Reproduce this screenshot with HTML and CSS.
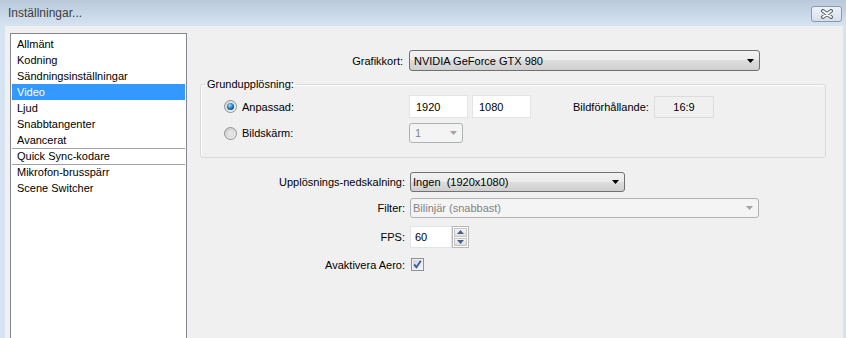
FILE: index.html
```html
<!DOCTYPE html>
<html>
    <head>
        <title>Inställningar...</title>
        <link rel="stylesheet" href="styles.css">
    </head>
    <body>
        <div class='window'>
            <div class='titlebar'>
                <span class='title'>Inställningar...</span>
                <div class='closeBtn'>
                    <svg viewBox='0 0 14 10' width='14' height='10'>
                        <path d='M3 2L11 8M11 2L3 8' stroke='#56606e' stroke-width='4' stroke-linecap='round'/>
                        <path d='M3 2L11 8M11 2L3 8' stroke='#fff' stroke-width='2' stroke-linecap='round'/>
                    </svg>
                </div>
            </div>
            <div class='frame'>
                <div class='client'>
                    <ul class='nav'>
                        <li>Allmänt</li>
                        <li>Kodning</li>
                        <li>Sändningsinställningar</li>
                        <li class='active'>Video</li>
                        <li>Ljud</li>
                        <li>Snabbtangenter</li>
                        <li>Avancerat</li>
                        <li class='sep'>Quick Sync-kodare</li>
                        <li class='sep'>Mikrofon-brusspärr</li>
                        <li>Scene Switcher</li>
                    </ul>
                    <div class='panel'>
                        <div class='row rowGpu'>
                            <span class='lbl'>Grafikkort:</span>
                            <div class='combo comboGpu'>
                                <span class='comboText'>NVIDIA GeForce GTX 980</span>
                                <svg class='arrow' viewBox='0 0 7 4' width='7' height='4'><path d='M0 0H7L3.5 4Z'/></svg>
                            </div>
                        </div>
                        <fieldset class='group'>
                            <legend>Grundupplösning:</legend>
                            <div class='grpRow'>
                                <div class='radioOpt'>
                                    <svg class='radio' viewBox='0 0 13 13' width='13' height='13'>
                                        <defs>
                                            <linearGradient id='rOut' x1='0' y1='0' x2='1' y2='1'>
                                                <stop offset='0' stop-color='#d4d4d4'/>
                                                <stop offset='1' stop-color='#f8f8f8'/>
                                            </linearGradient>
                                            <radialGradient id='rDot' cx='0.4' cy='0.35' r='0.7'>
                                                <stop offset='0' stop-color='#a8e1fb'/>
                                                <stop offset='0.5' stop-color='#2f8ad0'/>
                                                <stop offset='1' stop-color='#123f6b'/>
                                            </radialGradient>
                                        </defs>
                                        <circle cx='6.5' cy='6.5' r='6' fill='url(#rOut)' stroke='#8a8f95'/>
                                        <circle cx='6.5' cy='6.5' r='3.6' fill='url(#rDot)'/>
                                    </svg>
                                    <span>Anpassad:</span>
                                </div>
                                <div class='field'>1920</div>
                                <div class='field fieldGap'>1080</div>
                                <span class='ratioLbl'>Bildförhållande:</span>
                                <div class='ratioBox'>16:9</div>
                            </div>
                            <div class='grpRow grpRow2'>
                                <div class='radioOpt'>
                                    <svg class='radio' viewBox='0 0 13 13' width='13' height='13'>
                                        <defs>
                                            <linearGradient id='rOff' x1='0' y1='0' x2='1' y2='1'>
                                                <stop offset='0' stop-color='#c9c9c9'/>
                                                <stop offset='1' stop-color='#f6f6f6'/>
                                            </linearGradient>
                                        </defs>
                                        <circle cx='6.5' cy='6.5' r='6' fill='url(#rOff)' stroke='#8f9296'/>
                                        <circle cx='6.5' cy='6.5' r='3.6' fill='#e4e4e4' stroke='#d0d0d0' stroke-width='0.6'/>
                                    </svg>
                                    <span>Bildskärm:</span>
                                </div>
                                <div class='combo disabled comboScreen'>
                                    <span class='comboText'>1</span>
                                    <svg class='arrow' viewBox='0 0 7 4' width='7' height='4'><path d='M0 0H7L3.5 4Z'/></svg>
                                </div>
                            </div>
                        </fieldset>
                        <div class='row rowScale'>
                            <span class='lbl'>Upplösnings-nedskalning:</span>
                            <div class='combo comboScale'>
                                <span class='comboText'>Ingen&nbsp; (1920x1080)</span>
                                <svg class='arrow' viewBox='0 0 7 4' width='7' height='4'><path d='M0 0H7L3.5 4Z'/></svg>
                            </div>
                        </div>
                        <div class='row rowFilter'>
                            <span class='lbl'>Filter:</span>
                            <div class='combo disabled comboFilter'>
                                <span class='comboText'>Bilinjär (snabbast)</span>
                                <svg class='arrow' viewBox='0 0 7 4' width='7' height='4'><path d='M0 0H7L3.5 4Z'/></svg>
                            </div>
                        </div>
                        <div class='row rowFps'>
                            <span class='lbl'>FPS:</span>
                            <div class='spin'>
                                <div class='spinField'>60</div>
                                <div class='spinBtns'>
                                    <div class='spinBtn'>
                                        <svg viewBox='0 0 7 4' width='7' height='4'><path d='M0 4H7L3.5 0Z' fill='#4b6089'/></svg>
                                    </div>
                                    <div class='spinBtn'>
                                        <svg viewBox='0 0 7 4' width='7' height='4'><path d='M0 0H7L3.5 4Z' fill='#4b6089'/></svg>
                                    </div>
                                </div>
                            </div>
                        </div>
                        <div class='row rowAero'>
                            <span class='lbl'>Avaktivera Aero:</span>
                            <svg class='check' viewBox='0 0 13 13' width='13' height='13'>
                                <defs>
                                    <linearGradient id='cIn' x1='0' y1='0' x2='1' y2='1'>
                                        <stop offset='0' stop-color='#cfd3d8'/>
                                        <stop offset='1' stop-color='#f4f5f7'/>
                                    </linearGradient>
                                </defs>
                                <rect x='0.5' y='0.5' width='12' height='12' fill='#f4f4f4' stroke='#8e8f8f'/>
                                <rect x='2' y='2' width='9' height='9' fill='url(#cIn)'/>
                                <path d='M3.2 6.4L5.4 9.2L9.8 2.8' fill='none' stroke='#3a5a9e' stroke-width='1.8'/>
                            </svg>
                        </div>
                    </div>
                </div>
            </div>
        </div>
    </body>
</html>
```

FILE: styles.css
```css
html, body {
    margin: 0;
    height: 100%;
    overflow: hidden;
}
body {
    font-family: "Liberation Sans", Arial, sans-serif;
    font-size: 11px;
    color: #000;
    background-color: #d6e3f1;
}
.window {
    display: flex;
    flex-direction: column;
    height: 100%;
}
.titlebar {
    height: 26px;
    flex-shrink: 0;
    display: flex;
    align-items: center;
    padding: 0 4px 0 8px;
    background: linear-gradient(#b9c9db, #d6e3f1);
}
.title {
    flex-grow: 1;
    font-size: 12px;
    color: #3c3c3c;
}
.closeBtn {
    width: 29px;
    height: 14px;
    margin-top: 2px;
    border: 1px solid #8d99aa;
    border-radius: 3px;
    background: linear-gradient(#eef3f9, #d6dfeb);
    display: flex;
    align-items: center;
    justify-content: center;
}
.frame {
    flex-grow: 1;
    min-height: 0;
    display: flex;
    padding: 0 3px 0 5px;
}
.client {
    flex-grow: 1;
    display: flex;
    padding: 7px 0 0 5px;
    background-color: #f0f0f0;
    overflow: hidden;
}
.nav {
    box-sizing: border-box;
    width: 177px;
    flex-shrink: 0;
    margin: 0 0 -6px 0;
    padding: 2px 1px 0 1px;
    list-style: none;
    background-color: #fff;
    border: 1px solid #828790;
}
.nav li {
    box-sizing: border-box;
    height: 16px;
    line-height: 16px;
    padding-left: 5px;
    white-space: nowrap;
}
.nav li.sep {
    border-top: 1px solid #a0a0a0;
    line-height: 15px;
}
.nav li.active {
    background-color: #3399ff;
    color: #fff;
}
.panel {
    width: 626px;
    margin-left: 13px;
    padding-top: 17px;
    display: flex;
    flex-direction: column;
}
.row {
    display: flex;
    align-items: center;
}
.lbl {
    width: 205px;
    margin-right: 5px;
    flex-shrink: 0;
    text-align: right;
    white-space: nowrap;
}
.rowGpu .lbl {
    width: 203px;
    margin-right: 6px;
}
.combo {
    box-sizing: border-box;
    display: flex;
    align-items: center;
    padding: 0 5px 0 3px;
    border: 1px solid #707070;
    border-radius: 3px;
    background: linear-gradient(#f2f2f2 0%, #ebebeb 50%, #dddddd 50%, #cfcfcf 100%);
    white-space: nowrap;
}
.comboText {
    flex-grow: 1;
}
.arrow {
    fill: #000;
}
.combo.disabled {
    background: #f4f4f4;
    border-color: #adb2b5;
    color: #838383;
}
.combo.disabled .arrow {
    fill: #a3a3a3;
}
.comboGpu {
    width: 351px;
    height: 21px;
    padding-left: 4px;
}
.group {
    box-sizing: border-box;
    width: 626px;
    min-width: 0;
    margin: 7px 0 0 0;
    padding: 4px 0 14px 0;
    border: 1px solid #d9d9d9;
    border-radius: 3px;
    box-shadow: inset 1px 1px 0 #fff;
}
.group legend {
    margin-left: 4px;
    padding: 0 2px;
    line-height: 13px;
}
.grpRow {
    display: flex;
    align-items: center;
    padding-left: 23px;
}
.grpRow2 {
    margin-top: 5px;
}
.radioOpt {
    width: 185px;
    flex-shrink: 0;
    display: flex;
    align-items: center;
}
.radio {
    margin-right: 5px;
}
.field {
    box-sizing: border-box;
    width: 59px;
    height: 23px;
    padding-left: 6px;
    display: flex;
    align-items: center;
    background-color: #fff;
    border: 1px solid #e3e4e8;
}
.fieldGap {
    margin-left: 4px;
}
.ratioLbl {
    width: 81px;
    margin-left: 42px;
}
.ratioBox {
    box-sizing: border-box;
    width: 60px;
    height: 22px;
    line-height: 20px;
    text-align: center;
    border: 1px solid #dcdcdc;
    background-color: #f0f0f0;
}
.comboScreen {
    width: 54px;
    height: 20px;
    padding-left: 5px;
}
.rowScale {
    margin-top: 14px;
}
.comboScale {
    width: 215px;
    height: 20px;
    padding-left: 2px;
}
.rowFilter {
    margin-top: 6px;
}
.comboFilter {
    width: 349px;
    height: 20px;
    padding-left: 2px;
}
.rowFps {
    margin-top: 8px;
}
.spin {
    display: flex;
    height: 22px;
}
.spinField {
    box-sizing: border-box;
    width: 42px;
    padding-left: 4px;
    display: flex;
    align-items: center;
    background-color: #fff;
    border: 1px solid #e3e4e8;
}
.spinBtns {
    box-sizing: border-box;
    width: 17px;
    display: flex;
    flex-direction: column;
    gap: 1px;
    padding: 1px;
    border: 1px solid #b8b8b8;
    background-color: #fff;
}
.spinBtn {
    flex-grow: 1;
    display: flex;
    align-items: center;
    justify-content: center;
    border: 1px solid #c4c4c4;
    background: linear-gradient(#f6f6f6, #dedede);
}
.rowAero {
    margin-top: 10px;
}
.check {
    margin-left: 1px;
}
```
